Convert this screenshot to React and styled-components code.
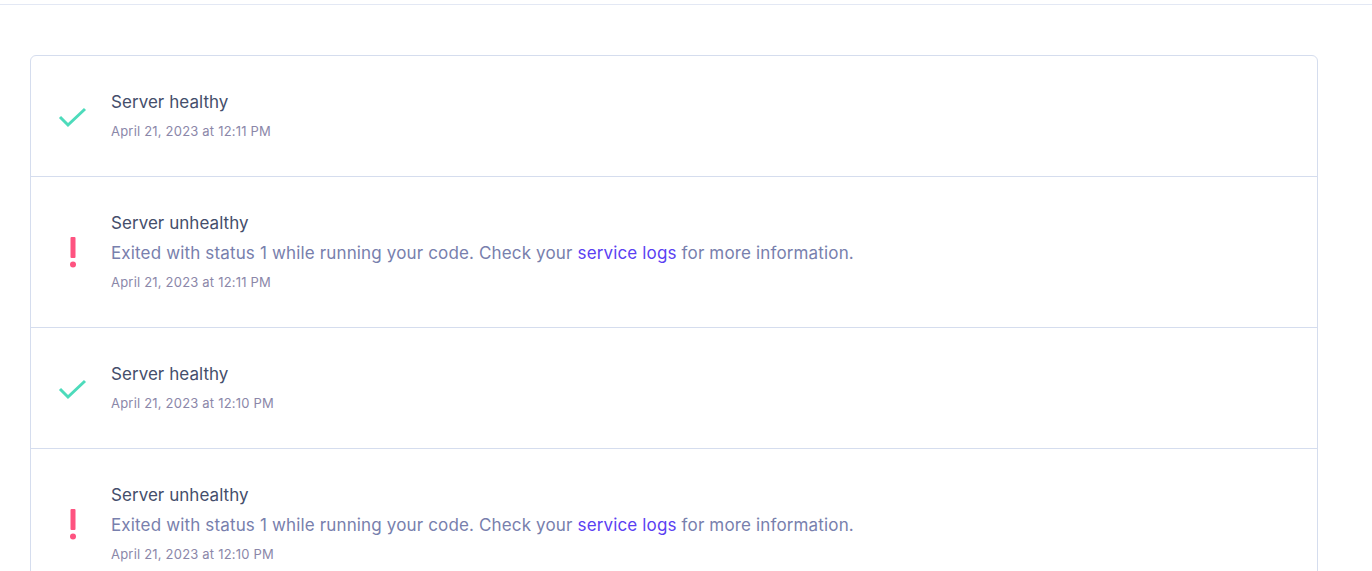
import React from "react";
import styled, { createGlobalStyle } from "styled-components";

const Global = createGlobalStyle`
  html, body { margin: 0; padding: 0; background: #fff; }
  body { font-family: Inter, "Noto Sans", sans-serif; -webkit-font-smoothing: antialiased; }
`;

const TopBar = styled.div`
  height: 4px;
  border-bottom: 1px solid #e3e8f4;
`;

const Page = styled.main`
  padding: 50px 54px 0 30px;
`;

const Card = styled.section`
  width: 1288px;
  border: 1px solid #d5ddee;
  border-radius: 6px;
  box-sizing: border-box;
`;

const Row = styled.div`
  display: flex;
  align-items: center;
  padding: 31px 0 30px;
  border-top: ${(p) => (p.$first ? "none" : "1px solid #d5ddee")};
`;

const IconCell = styled.div`
  width: 80px;
  padding-left: 3px;
  box-sizing: border-box;
  display: flex;
  justify-content: center;
  align-items: center;
  flex: none;
`;

const Body = styled.div`
  display: flex;
  flex-direction: column;
`;

const Title = styled.div`
  font-size: 17px;
  line-height: 30px;
  color: #444e6b;
  letter-spacing: 0.05px;
`;

const Desc = styled.div`
  font-size: 17px;
  line-height: 30px;
  color: #7880ad;
  letter-spacing: 0.15px;
`;

const Link = styled.a`
  color: #5b3ff2;
  text-decoration: none;
`;

const DateText = styled.div`
  font-size: 13px;
  line-height: 29px;
  color: #8b87a9;
  letter-spacing: 0.2px;
`;

const Check = () => (
  <svg width="30" height="24" viewBox="0 0 30 24">
    <path d="M2 12 L10 20 L27 4" fill="none" stroke="#4ddbbb" strokeWidth="3" strokeLinecap="butt" />
  </svg>
);

const Bang = () => (
  <svg width="10" height="32" viewBox="0 0 10 32">
    <rect x="2.5" y="0" width="5" height="21" rx="1" fill="#fe5380" />
    <circle cx="5" cy="27.5" r="3" fill="#fe5380" />
  </svg>
);

const events = [
  { ok: true, time: "April 21, 2023 at 12:11 PM" },
  { ok: false, time: "April 21, 2023 at 12:11 PM" },
  { ok: true, time: "April 21, 2023 at 12:10 PM" },
  { ok: false, time: "April 21, 2023 at 12:10 PM" },
];

export default function App() {
  return (
    <>
      <Global />
      <TopBar />
      <Page>
        <Card>
          {events.map((e, i) => (
            <Row key={i} $first={i === 0}>
              <IconCell>{e.ok ? <Check /> : <Bang />}</IconCell>
              <Body>
                <Title>{e.ok ? "Server healthy" : "Server unhealthy"}</Title>
                {!e.ok && (
                  <Desc>
                    Exited with status 1 while running your code. Check your{" "}
                    <Link href="#">service logs</Link> for more information.
                  </Desc>
                )}
                <DateText>{e.time}</DateText>
              </Body>
            </Row>
          ))}
        </Card>
      </Page>
    </>
  );
}
